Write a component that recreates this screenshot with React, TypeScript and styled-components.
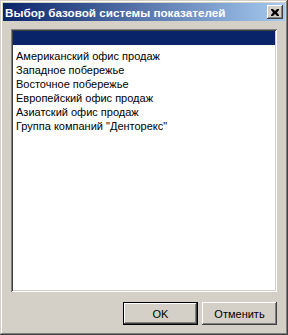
import styled, { createGlobalStyle } from "styled-components";

const GlobalStyle = createGlobalStyle`
  html, body {
    margin: 0;
    padding: 0;
    background: #d4d0c8;
  }
`;

const Window = styled.div`
  box-sizing: border-box;
  width: 288px;
  height: 335px;
  padding: 3px;
  background: #d4d0c8;
  box-shadow: inset -1px -1px #404040, inset 1px 1px #d4d0c8,
    inset -2px -2px #808080, inset 2px 2px #ffffff;
  display: flex;
  flex-direction: column;
  font-family: "Liberation Sans", Arial, sans-serif;
`;

const TitleBar = styled.div`
  height: 18px;
  display: flex;
  align-items: center;
  justify-content: space-between;
  padding: 0 2px 0 2px;
  background: linear-gradient(to right, #0a246a, #a6caf0);
`;

const Title = styled.span`
  color: #ffffff;
  font-weight: bold;
  font-size: 11.7px;
  font-family: "Liberation Sans", Tahoma, sans-serif;
  white-space: nowrap;
`;

const CloseButton = styled.button`
  box-sizing: border-box;
  width: 16px;
  height: 14px;
  padding: 0;
  border: none;
  background: #d4d0c8;
  display: flex;
  align-items: center;
  justify-content: center;
  box-shadow: inset -1px -1px #404040, inset 1px 1px #ffffff,
    inset -2px -2px #808080, inset 2px 2px #d4d0c8;
`;

const Body = styled.div`
  flex: 1;
  display: flex;
  flex-direction: column;
  padding: 8px 8px 7px 8px;
`;

const ListBox = styled.div`
  box-sizing: border-box;
  height: 263px;
  padding: 2px;
  background: #ffffff;
  box-shadow: inset 1px 1px #808080, inset -1px -1px #ffffff,
    inset 2px 2px #404040, inset -2px -2px #d4d0c8;
  overflow: hidden;
`;

const Item = styled.div<{ $selected?: boolean }>`
  box-sizing: border-box;
  height: 14px;
  padding: 4px 0 0 3px;
  line-height: 14px;
  font-family: "Liberation Sans", Arial, sans-serif;
  font-size: 11px;
  color: ${(p) => (p.$selected ? "#ffffff" : "#000000")};
  background: ${(p) => (p.$selected ? "#0a246a" : "transparent")};
  white-space: nowrap;
`;

const ButtonRow = styled.div`
  display: flex;
  justify-content: flex-end;
  gap: 4px;
  margin-top: 10px;
`;

const Button = styled.button<{ $default?: boolean }>`
  box-sizing: border-box;
  width: 75px;
  height: 23px;
  padding: 0;
  border: none;
  background: #d4d0c8;
  font-family: "Liberation Sans", Arial, sans-serif;
  font-size: 11px;
  color: #000000;
  box-shadow: ${(p) =>
    p.$default
      ? "inset 0 0 0 1px #000000, inset -2px -2px #404040, inset 2px 2px #ffffff, inset -3px -3px #808080"
      : "inset -1px -1px #404040, inset 1px 1px #ffffff, inset -2px -2px #808080, inset 2px 2px #d4d0c8"};
`;

const items = [
  "",
  "Американский офис продаж",
  "Западное побережье",
  "Восточное побережье",
  "Европейский офис продаж",
  "Азиатский офис продаж",
  'Группа компаний "Денторекс"',
];

export default function App() {
  return (
    <>
      <GlobalStyle />
      <Window>
        <TitleBar>
          <Title>Выбор базовой системы показателей</Title>
          <CloseButton>
            <svg width="8" height="7" viewBox="0 0 8 7">
              <path
                d="M0 0h2l2 2 2-2h2v1L6 3.5 8 6v1H6L4 5 2 7H0V6l2-2.5L0 1z"
                fill="#000000"
              />
            </svg>
          </CloseButton>
        </TitleBar>
        <Body>
          <ListBox>
            {items.map((label, index) => (
              <Item key={index.toString()} $selected={index === 0}>
                {label}
              </Item>
            ))}
          </ListBox>
          <ButtonRow>
            <Button $default>OK</Button>
            <Button>Отменить</Button>
          </ButtonRow>
        </Body>
      </Window>
    </>
  );
}
